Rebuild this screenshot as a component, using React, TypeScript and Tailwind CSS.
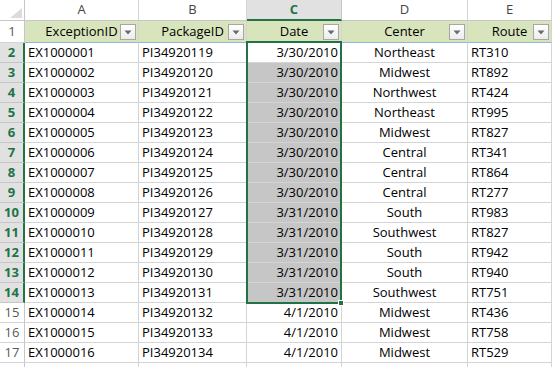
import React from 'react'

const rows = [
  ['EX1000001', 'PI34920119', '3/30/2010', 'Northeast', 'RT310'],
  ['EX1000002', 'PI34920120', '3/30/2010', 'Midwest', 'RT892'],
  ['EX1000003', 'PI34920121', '3/30/2010', 'Northwest', 'RT424'],
  ['EX1000004', 'PI34920122', '3/30/2010', 'Northeast', 'RT995'],
  ['EX1000005', 'PI34920123', '3/30/2010', 'Midwest', 'RT827'],
  ['EX1000006', 'PI34920124', '3/30/2010', 'Central', 'RT341'],
  ['EX1000007', 'PI34920125', '3/30/2010', 'Central', 'RT864'],
  ['EX1000008', 'PI34920126', '3/30/2010', 'Central', 'RT277'],
  ['EX1000009', 'PI34920127', '3/31/2010', 'South', 'RT983'],
  ['EX1000010', 'PI34920128', '3/31/2010', 'Southwest', 'RT827'],
  ['EX1000011', 'PI34920129', '3/31/2010', 'South', 'RT942'],
  ['EX1000012', 'PI34920130', '3/31/2010', 'South', 'RT940'],
  ['EX1000013', 'PI34920131', '3/31/2010', 'Southwest', 'RT751'],
  ['EX1000014', 'PI34920132', '4/1/2010', 'Midwest', 'RT436'],
  ['EX1000015', 'PI34920133', '4/1/2010', 'Midwest', 'RT758'],
  ['EX1000016', 'PI34920134', '4/1/2010', 'Midwest', 'RT529'],
]

const cols = [
  { letter: 'A', title: 'ExceptionID', w: 'w-[114px]', align: 'justify-start' },
  { letter: 'B', title: 'PackageID', w: 'w-[108px]', align: 'justify-start' },
  { letter: 'C', title: 'Date', w: 'w-[95px]', align: 'justify-end' },
  { letter: 'D', title: 'Center', w: 'w-[126px]', align: 'justify-center' },
  { letter: 'E', title: 'Route', w: 'w-[84px]', align: 'justify-start' },
]

const FilterButton = () => (
  <div className="absolute right-[2px] top-[3px] w-[16px] h-[16px] border border-[#a6a6a6] bg-gradient-to-b from-white to-[#ececec] flex items-center justify-center">
    <svg width="8" height="5" viewBox="0 0 8 5">
      <path d="M0.5 0.5 L7.5 0.5 L4 4.5 Z" fill="#6a6a6a" />
    </svg>
  </div>
)

const RowHeader = ({ n, selected }: { n?: number; selected?: boolean }) => (
  <div
    className={
      selected
        ? 'w-[25px] shrink-0 flex items-center justify-center bg-[#e1e1e1] text-[#217346] font-bold border-r-2 border-r-[#217346] border-b border-b-[#c6c6c6]'
        : 'w-[25px] shrink-0 flex items-center justify-center bg-white text-[#595959] border-r border-r-[#c6c6c6] border-b border-b-[#d4d4d4]'
    }
  >
    {n}
  </div>
)

export default function App() {
  return (
    <div
      className="relative w-[552px] h-[367px] overflow-hidden bg-white text-[13px] text-black"
      style={{ fontFamily: '"Open Sans", "Liberation Sans", sans-serif' }}
    >
      {/* column letters */}
      <div className="flex h-[21px]">
        <div className="w-[25px] shrink-0 border-r border-b border-[#c6c6c6] flex items-end justify-end p-[2px]">
          <svg width="12" height="10" viewBox="0 0 12 10">
            <path d="M12 0 L12 10 L0 10 Z" fill="#dcdcdc" />
          </svg>
        </div>
        {cols.map((c) =>
          c.letter === 'C' ? (
            <div
              key={c.letter}
              className={`${c.w} shrink-0 flex items-center justify-center bg-[#e1e1e1] text-[#217346] font-bold border-r border-r-[#c6c6c6] border-b-2 border-b-[#217346]`}
            >
              {c.letter}
            </div>
          ) : (
            <div
              key={c.letter}
              className={`${c.w} shrink-0 flex items-center justify-center text-[#444] border-r border-r-[#d4d4d4] border-b border-b-[#c6c6c6]`}
            >
              {c.letter}
            </div>
          ),
        )}
      </div>

      {/* table header row */}
      <div className="flex h-[22px]">
        <RowHeader n={1} />
        {cols.map((c) => (
          <div
            key={c.letter}
            className={`${c.w} shrink-0 relative flex items-center justify-center bg-[#d8e4bc] border-r border-r-[#d4d4d4] border-b border-b-[#95b3d7]`}
          >
            {c.title}
            <FilterButton />
          </div>
        ))}
      </div>

      {rows.map((r, i) => {
        const n = i + 2
        const sel = n <= 14
        return (
          <div key={n} className="flex h-[20px]">
            <RowHeader n={n} selected={sel} />
            {cols.map((c, j) => {
              const shaded = j === 2 && n >= 3 && n <= 14
              return (
                <div
                  key={c.letter}
                  className={`${c.w} shrink-0 flex items-center px-[3px] whitespace-nowrap overflow-hidden border-r border-b border-[#d4d4d4] ${c.align} ${shaded ? 'bg-[#c6c6c6]' : 'bg-white'}`}
                >
                  {r[j]}
                </div>
              )
            })}
          </div>
        )
      })}

      {/* row 18, only its top edge is in view */}
      <div className="flex h-[20px]">
        <RowHeader />
        {cols.map((c) => (
          <div key={c.letter} className={`${c.w} shrink-0 border-r border-b border-[#d4d4d4]`} />
        ))}
      </div>

      {/* selection range C2:C14 */}
      <div className="absolute left-[246px] top-[41px] w-[96px] h-[263px] border-2 border-[#217346] pointer-events-none">
        <div className="absolute right-[-4px] bottom-[-4px] w-[6px] h-[6px] bg-[#217346] border border-white" />
      </div>
    </div>
  )
}
